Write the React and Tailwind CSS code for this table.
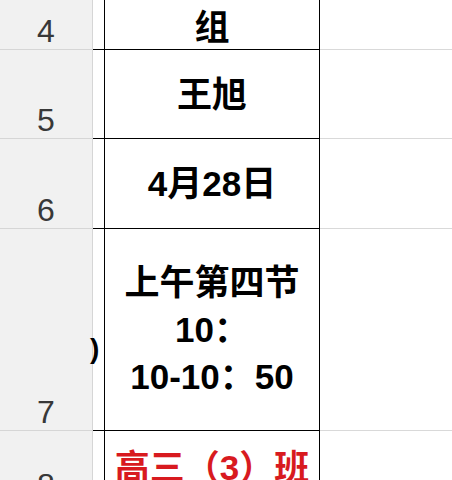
import React from 'react';

const rows = [
    { num: '4', h: 'h-[50px]', lines: ['组'], top: true },
    { num: '5', h: 'h-[89px]', lines: ['王旭'] },
    { num: '6', h: 'h-[90px]', lines: ['4月28日'] },
    { num: '7', h: 'h-[202px]', lines: ['上午第四节', '10：', '10-10：50'], overflow: true },
    { num: '8', h: 'h-[73px]', lines: ['高三（3）班'], red: true },
];

const App = () => {
    return (
        <div
            className="w-[452px] h-[480px] overflow-hidden bg-white"
            style={{ fontFamily: '"Liberation Sans", "Noto Sans CJK SC", sans-serif' }}
        >
            {rows.map((row) => (
                <div key={row.num} className={`flex shrink-0 ${row.h}`}>
                    {/* row header */}
                    <div className="w-[93px] shrink-0 bg-[#f1f1f1] border-r border-b border-[#d6d6d6] flex items-end justify-center pb-[2px]">
                        <span className="text-[32px] leading-none text-[#383838]">{row.num}</span>
                    </div>
                    {/* narrow gap column */}
                    <div className="relative w-[11px] shrink-0 border-b border-black">
                        {row.overflow && (
                            <span className="absolute left-[-3px] top-[106px] text-[28px] font-bold leading-none text-black">)</span>
                        )}
                    </div>
                    {/* content cell */}
                    <div
                        className={`w-[216px] shrink-0 border-l border-r border-b border-black flex flex-col items-center ${row.top ? 'justify-start pt-[4px]' : 'justify-center'}`}
                    >
                        {row.lines.map((line) => (
                            <div
                                key={line}
                                className={`text-[35px] font-bold leading-[47px] whitespace-nowrap ${row.red ? 'text-[#d81a1f]' : 'text-black'}`}
                            >
                                {line}
                            </div>
                        ))}
                    </div>
                    {/* right empty column */}
                    <div className="flex-1 border-b border-[#d9d9d9]"></div>
                </div>
            ))}
        </div>
    );
};

export default App;
